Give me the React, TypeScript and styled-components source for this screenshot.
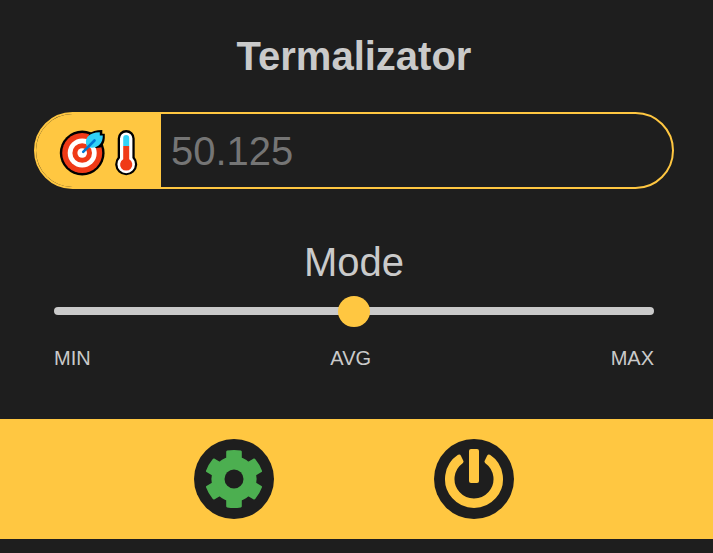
import React, { useState } from "react";
import styled, { createGlobalStyle } from "styled-components";

const ink = "#1e1e1e";
const amber = "#ffc741";
const silver = "#cacaca";

const GlobalStyle = createGlobalStyle`
  *, *::before, *::after { box-sizing: border-box; }
  body {
    margin: 0;
    background: ${ink};
    color: ${silver};
    font-family: "Liberation Sans", Arial, sans-serif;
    font-size: 40px;
    line-height: 46px;
  }
`;

const Page = styled.div`
  display: flex;
  flex-direction: column;
`;

const Content = styled.main`
  display: flex;
  flex-direction: column;
  padding: 33px 39px 49px 34px;
`;

const Title = styled.h1`
  margin: 0 0 33px;
  font-size: 40px;
  font-weight: 700;
  text-align: center;
`;

const Field = styled.div`
  display: flex;
  height: 77px;
  border: 2px solid ${amber};
  border-radius: 40px;
  overflow: hidden;
`;

const FieldLabel = styled.label`
  display: flex;
  flex: none;
  align-items: center;
  padding: 5px 23px 0 22px;
  background: ${amber};
`;

const FieldInput = styled.input`
  flex: 1;
  min-width: 0;
  padding: 0 10px;
  border: 0;
  outline: 0;
  background: transparent;
  color: ${silver};
  font: inherit;
  &::placeholder {
    color: #757575;
    opacity: 1;
  }
`;

const Mode = styled.section`
  display: flex;
  flex-direction: column;
  margin-top: 50px;
  padding: 0 20px;
`;

const ModeLabel = styled.label`
  margin-bottom: 10px;
  text-align: center;
`;

const Slider = styled.input`
  appearance: none;
  width: 100%;
  height: 31px;
  margin: 0;
  background: transparent;
  &::-webkit-slider-runnable-track {
    height: 8px;
    border-radius: 4px;
    background: ${silver};
  }
  &::-webkit-slider-thumb {
    appearance: none;
    width: 32px;
    height: 31px;
    margin-top: -11px;
    border-radius: 50%;
    background: ${amber};
  }
`;

const Ticks = styled.div`
  display: flex;
  justify-content: space-between;
  margin-top: 21px;
  font-size: 20px;
  line-height: 23px;
`;

const Footer = styled.footer`
  display: flex;
  justify-content: space-evenly;
  padding: 20px 39px 20px 34px;
  background: ${amber};
`;

const RoundButton = styled.button`
  display: flex;
  align-items: center;
  justify-content: center;
  width: 80px;
  height: 80px;
  padding: 0;
  border: 0;
  border-radius: 50%;
  background: ${ink};
  cursor: pointer;
`;

const TargetTemperatureIcon = () => (
  <svg width="80" height="48" viewBox="0 0 80 48" aria-hidden="true">
    <circle cx="24.2" cy="24" r="22.4" fill="#000" />
    <circle cx="24.2" cy="24" r="20" fill="#f03a17" />
    <circle cx="24.2" cy="24" r="14.5" fill="#fff" />
    <circle cx="24.2" cy="24" r="9.8" fill="#f03a17" />
    <circle cx="24.2" cy="24" r="4.8" fill="#fff" />
    <path d="M31 5 Q35 1.2 44.3 1 V4.7 H46.8 V9 Q46.5 15 42.5 18.5 L38 19 L30 13Z" fill="#000" />
    <path d="M29 18 C25.5 9 30.5 3.5 41.8 3.2 V6.6 H44.8 C45 15.5 38.5 20.8 29 18Z" fill="#31d2f7" />
    <path d="M25.2 22.8 L36.5 11.5" fill="none" stroke="#0078d4" strokeWidth="2.6" strokeLinecap="round" />
    <path d="M59.7 9.6 a8.5 8.5 0 0 1 17 0 V28.3 a11 11 0 1 1 -17 0Z" fill="#000" />
    <path d="M62 9.6 a6.2 6.2 0 0 1 12.4 0 V29.1 a8.8 8.8 0 1 1 -12.4 0Z" fill="#fff" />
    <path d="M65.2 17 V9 a3 3 0 0 1 6 0 V17Z" fill="#31d2f7" />
    <path d="M65.2 17 H71.2 V30.2 a6.1 6.1 0 1 1 -6 0Z" fill="#f03a17" />
  </svg>
);

const GearIcon = () => (
  <svg width="60" height="60" viewBox="-30 -30 60 60" aria-hidden="true">
    <g fill="#4caf50">
      <circle r="22.6" />
      {[0, 60, 120, 180, 240, 300].map((angle) => (
        <path
          key={angle}
          transform={`rotate(${angle})`}
          d="M-7.8 -18 V-27.3 Q-7.8 -28.2 -6.8 -28.4 Q0 -29.6 6.8 -28.4 Q7.8 -28.2 7.8 -27.3 V-18Z"
        />
      ))}
    </g>
    <circle r="9.5" fill={ink} />
  </svg>
);

const PowerIcon = () => (
  <svg width="60" height="60" viewBox="-30 -30 60 60" aria-hidden="true">
    <path
      d="M-14.9 -22.5 A27 27 0 1 0 14.9 -22.5 L12.5 -17.5 A21.5 21.5 0 1 1 -12.5 -17.5Z"
      fill={amber}
      stroke={amber}
      strokeWidth="4"
      strokeLinejoin="round"
    />
    <rect x="-5" y="-30" width="10" height="34" rx="2" fill={amber} />
  </svg>
);

export default function App() {
  const [temperature, setTemperature] = useState("");
  const [mode, setMode] = useState(1);

  return (
    <Page>
      <GlobalStyle />
      <Content>
        <Title>Termalizator</Title>
        <Field>
          <FieldLabel htmlFor="temperature" aria-label="Target temperature">
            <TargetTemperatureIcon />
          </FieldLabel>
          <FieldInput
            id="temperature"
            type="text"
            inputMode="decimal"
            placeholder="50.125"
            value={temperature}
            onChange={(event) => setTemperature(event.target.value)}
          />
        </Field>
        <Mode>
          <ModeLabel htmlFor="mode">Mode</ModeLabel>
          <Slider
            id="mode"
            type="range"
            min={0}
            max={2}
            value={mode}
            onChange={(event) => setMode(Number(event.target.value))}
          />
          <Ticks>
            <span>MIN</span>
            <span>AVG</span>
            <span>MAX</span>
          </Ticks>
        </Mode>
      </Content>
      <Footer>
        <RoundButton type="button" aria-label="Settings">
          <GearIcon />
        </RoundButton>
        <RoundButton type="button" aria-label="Power">
          <PowerIcon />
        </RoundButton>
      </Footer>
    </Page>
  );
}
